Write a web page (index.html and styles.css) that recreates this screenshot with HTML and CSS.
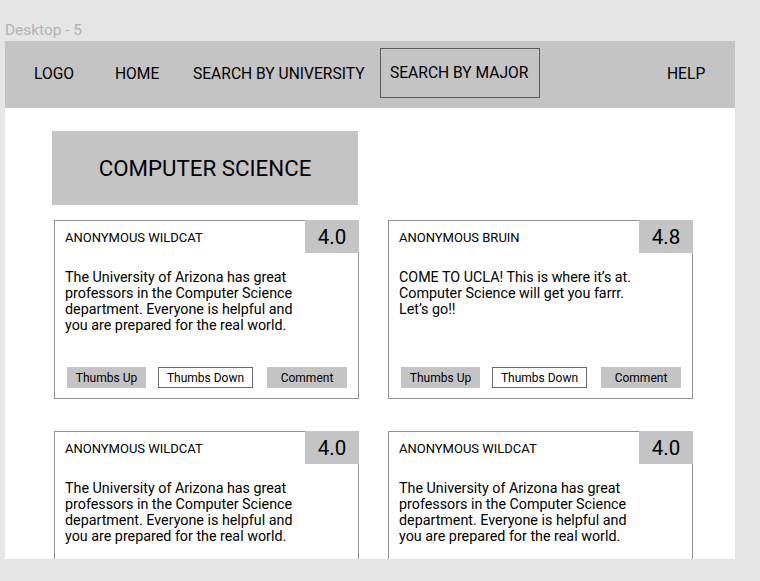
FILE: index.html
```html
<!DOCTYPE html>
<html>
<head>
<meta charset="utf-8">
<link rel="stylesheet" href="styles.css">
</head>
<body>
<div class="label">Desktop - 5</div>
<div class="frame">
  <nav class="nav">
    <span class="nav-item">LOGO</span>
    <span class="nav-item">HOME</span>
    <span class="nav-item">SEARCH BY UNIVERSITY</span>
    <span class="nav-item nav-active">SEARCH BY MAJOR</span>
    <span class="nav-item">HELP</span>
  </nav>
  <div class="content">
    <div class="major-title">COMPUTER SCIENCE</div>
    <div class="cards">
      <div class="card">
        <div class="rating">4.0</div>
        <div class="author">ANONYMOUS WILDCAT</div>
        <p class="review">The University of Arizona has great professors in the Computer Science department. Everyone is helpful and you are prepared for the real world.</p>
        <div class="actions">
          <span class="btn btn-up">Thumbs Up</span>
          <span class="btn btn-down">Thumbs Down</span>
          <span class="btn btn-comment">Comment</span>
        </div>
      </div>
      <div class="card">
        <div class="rating">4.8</div>
        <div class="author">ANONYMOUS BRUIN</div>
        <p class="review">COME TO UCLA! This is where it’s at. Computer Science will get you farrr. Let’s go!!</p>
        <div class="actions">
          <span class="btn btn-up">Thumbs Up</span>
          <span class="btn btn-down">Thumbs Down</span>
          <span class="btn btn-comment">Comment</span>
        </div>
      </div>
      <div class="card">
        <div class="rating">4.0</div>
        <div class="author">ANONYMOUS WILDCAT</div>
        <p class="review">The University of Arizona has great professors in the Computer Science department. Everyone is helpful and you are prepared for the real world.</p>
      </div>
      <div class="card">
        <div class="rating">4.0</div>
        <div class="author">ANONYMOUS WILDCAT</div>
        <p class="review">The University of Arizona has great professors in the Computer Science department. Everyone is helpful and you are prepared for the real world.</p>
      </div>
    </div>
  </div>
</div>
</body>
</html>
```
FILE: styles.css
```css
* { box-sizing: border-box; }
html, body {
  margin: 0;
  padding: 0;
  background: #e5e5e5;
  font-family: Roboto, "Liberation Sans", sans-serif;
  color: #000;
  height: 581px;
  overflow: hidden;
}
.label {
  padding: 21px 0 0 5px;
  height: 41px;
  font-size: 15.4px;
  line-height: 18px;
  color: #b3b3b3;
}
.frame {
  margin-left: 5px;
  width: 730px;
  height: 518px;
  background: #fff;
  overflow: hidden;
}
.nav {
  height: 67px;
  background: #c4c4c4;
  display: grid;
  grid-template-columns: 81px 78px 187px 287px auto;
  align-items: center;
  padding-left: 29px;
  font-size: 15.6px;
}
.nav-item {
  white-space: nowrap;
  margin-top: -2px;
}
.nav-active {
  width: 160px;
  height: 50px;
  border: 1px solid #5a5a5a;
  display: flex;
  align-items: center;
  padding-left: 9px;
  margin-top: -3px;
}
.content {
  padding: 23px 0 0 47px;
}
.major-title {
  width: 306px;
  height: 74px;
  background: #c4c4c4;
  display: flex;
  align-items: center;
  justify-content: center;
  font-size: 22.3px;
}
.cards {
  margin: 15px 0 0 2px;
  display: grid;
  grid-template-columns: 305px 305px;
  column-gap: 29px;
  row-gap: 32px;
}
.card {
  position: relative;
  height: 179px;
  border: 1px solid #929292;
  display: flex;
  flex-direction: column;
  padding: 0 10px;
}
.rating {
  position: absolute;
  top: -1px;
  right: -1px;
  width: 54px;
  height: 33px;
  background: #c4c4c4;
  font-size: 20.5px;
  display: flex;
  align-items: center;
  justify-content: center;
}
.author {
  font-size: 13px;
  line-height: 16px;
  margin-top: 9px;
}
.review {
  margin: 23px 0 0;
  font-size: 14.3px;
  line-height: 16px;
  width: 236px;
}
.actions {
  margin-top: auto;
  margin-bottom: 10px;
  display: flex;
  padding-left: 2px;
}
.btn {
  height: 21px;
  font-size: 12px;
  display: flex;
  align-items: center;
  justify-content: center;
}
.btn-up {
  width: 79px;
  background: #c4c4c4;
}
.btn-down {
  width: 95px;
  margin-left: 12px;
  border: 1px solid #6a6a6a;
}
.btn-comment {
  width: 80px;
  margin-left: 14px;
  background: #c4c4c4;
}
```
